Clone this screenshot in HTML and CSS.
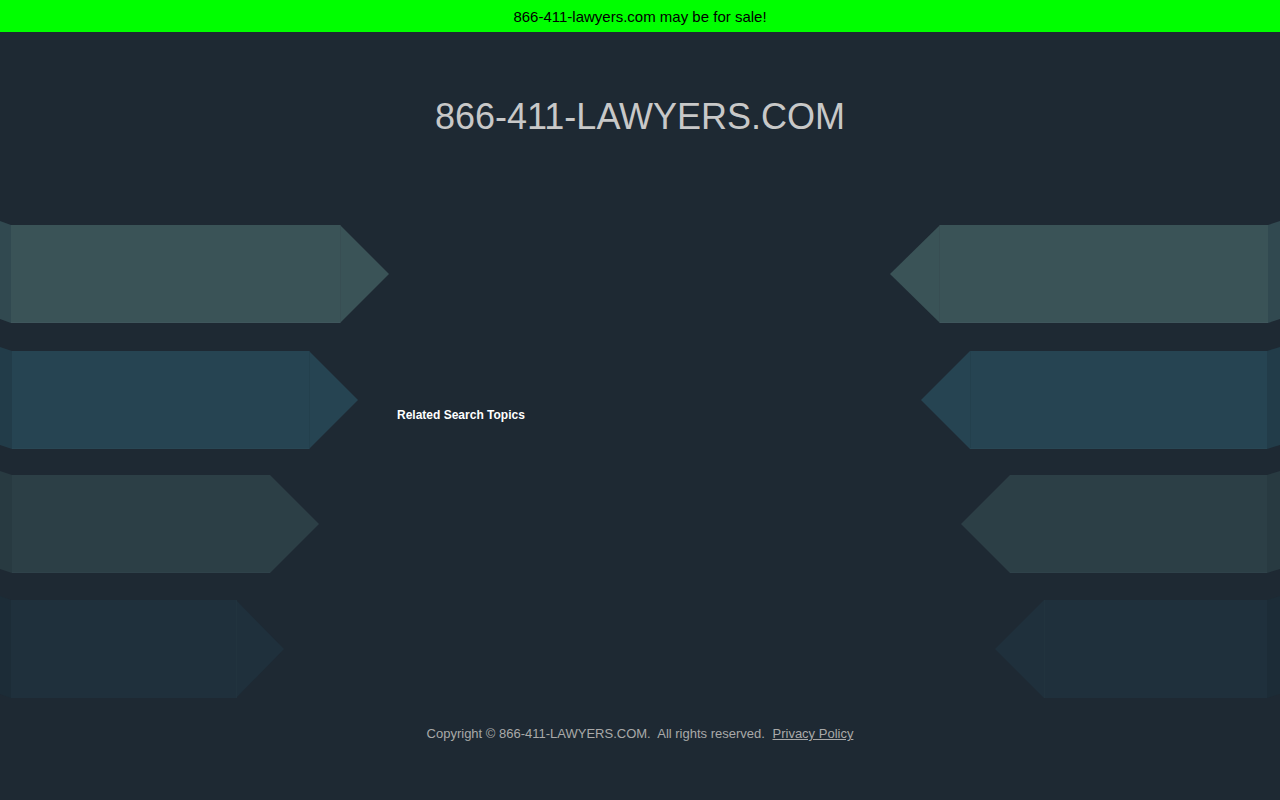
FILE: index.html
```html
<!DOCTYPE html>
<html lang="en">
<head>
<meta charset="utf-8">
<title>866-411-LAWYERS.COM</title>
<link rel="stylesheet" href="styles.css">
</head>
<body>
<div class="sale-bar">866-411-lawyers.com may be for sale!</div>
<header class="header">
  <h1 class="domain">866-411-LAWYERS.COM</h1>
</header>
<main class="main">
  <div class="side side-left">
    <svg width="390" height="480" viewBox="0 0 390 480" aria-hidden="true">
      <g>
        <polygon points="0,1 11,5 11,103 0,99" fill="#314950"/>
        <polygon points="11,5 340,5 389,54 340,103 11,103" fill="#3a5357"/>
        <line x1="340.5" y1="5" x2="340.5" y2="103" stroke="#36494f" stroke-opacity="0.5"/>
        <line x1="11" y1="102.5" x2="340" y2="102.5" stroke="#41595e" stroke-opacity="0.7"/>
      </g>
      <g>
        <polygon points="0,127 12,131 12,229 0,225" fill="#223c49"/>
        <polygon points="12,131 309,131 358,180 309,229 12,229" fill="#264452"/>
        <line x1="309.5" y1="131" x2="309.5" y2="229" stroke="#223e4b" stroke-opacity="0.6"/>
        <line x1="12" y1="228.5" x2="309" y2="228.5" stroke="#2b4856" stroke-opacity="0.7"/>
      </g>
      <g>
        <polygon points="0,251 12,255 12,353 0,349" fill="#283a41"/>
        <polygon points="12,255 270,255 319,304 270,353 12,353" fill="#2c3f46"/>
        <line x1="12" y1="352.5" x2="270" y2="352.5" stroke="#31444b" stroke-opacity="0.7"/>
      </g>
      <g>
        <polygon points="0,376 11,380 11,478 0,474" fill="#1c2c37"/>
        <polygon points="11,380 236,380 284,429 236,478 11,478" fill="#1f303c"/>
        <line x1="236.5" y1="380" x2="236.5" y2="478" stroke="#22343f" stroke-opacity="0.7"/>
      </g>
    </svg>
  </div>
  <div class="center">
    <h2 class="related">Related Search Topics</h2>
  </div>
  <div class="side side-right">
    <svg width="390" height="480" viewBox="0 0 390 480" aria-hidden="true">
      <g>
        <polygon points="378,5 390,1 390,99 378,103" fill="#314950"/>
        <polygon points="0,54 50,5 378,5 378,103 50,103" fill="#3a5357"/>
        <line x1="49.5" y1="5" x2="49.5" y2="103" stroke="#36494f" stroke-opacity="0.5"/>
        <line x1="50" y1="102.5" x2="378" y2="102.5" stroke="#41595e" stroke-opacity="0.7"/>
      </g>
      <g>
        <polygon points="377,131 390,127 390,225 377,229" fill="#223c49"/>
        <polygon points="31,180 80,131 377,131 377,229 80,229" fill="#264452"/>
        <line x1="80.5" y1="131" x2="80.5" y2="229" stroke="#223e4b" stroke-opacity="0.6"/>
        <line x1="80" y1="228.5" x2="377" y2="228.5" stroke="#2b4856" stroke-opacity="0.7"/>
      </g>
      <g>
        <polygon points="377,255 390,251 390,349 377,353" fill="#283a41"/>
        <polygon points="71,304 120,255 377,255 377,353 120,353" fill="#2c3f46"/>
        <line x1="120" y1="352.5" x2="377" y2="352.5" stroke="#31444b" stroke-opacity="0.7"/>
      </g>
      <g>
        <polygon points="377,380 390,376 390,474 377,478" fill="#1c2c37"/>
        <polygon points="105,429 154,380 377,380 377,478 154,478" fill="#1f303c"/>
        <line x1="154.5" y1="380" x2="154.5" y2="478" stroke="#22343f" stroke-opacity="0.7"/>
      </g>
    </svg>
  </div>
</main>
<footer class="footer">
  <span class="copyright">Copyright © 866-411-LAWYERS.COM.&nbsp; All rights reserved.&nbsp;</span><a class="privacy" href="#">Privacy Policy</a>
</footer>
</body>
</html>
```

FILE: styles.css
```css
* {
  box-sizing: border-box;
}

html, body {
  margin: 0;
  padding: 0;
}

body {
  background: #1e2933;
  font-family: "Liberation Sans", Arial, sans-serif;
  width: 1280px;
  height: 800px;
  overflow: hidden;
}

.sale-bar {
  height: 32px;
  line-height: 33px;
  background: #00ff00;
  color: #000;
  font-size: 15px;
  text-align: center;
}

.header {
  padding-top: 64px;
  text-align: center;
}

.domain {
  margin: 0;
  font-size: 36px;
  font-weight: normal;
  line-height: 41px;
  color: #c8c8c8;
}

.main {
  display: flex;
  height: 480px;
  margin-top: 83px;
}

.side {
  flex: 0 0 390px;
  height: 480px;
}

.side svg {
  display: block;
}

.center {
  flex: 1;
  padding-top: 188px;
  padding-left: 7px;
}

.related {
  margin: 0;
  font-size: 12px;
  font-weight: bold;
  line-height: 14px;
  color: #ffffff;
}

.footer {
  padding-top: 26px;
  text-align: center;
  font-size: 13px;
  line-height: 15px;
  color: #a9a9a9;
}

.copyright {
  white-space: pre;
}

.privacy {
  color: #a9a9a9;
  text-decoration: underline;
  margin-left: 4px;
}
```
